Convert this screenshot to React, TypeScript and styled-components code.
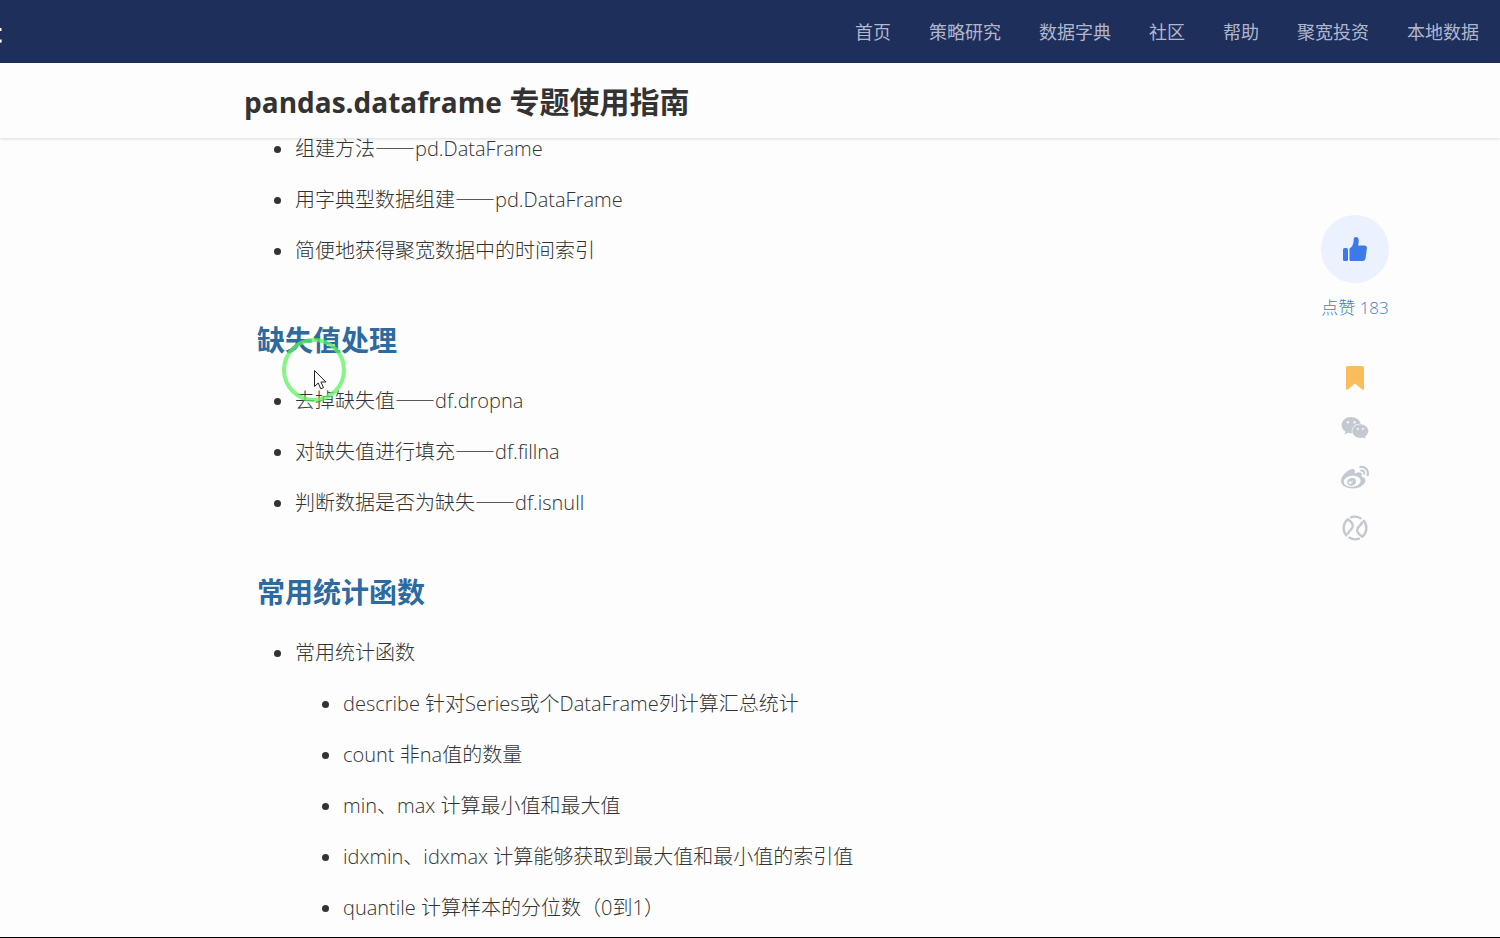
import React from "react";
import styled, { createGlobalStyle } from "styled-components";
import { FaWeixin, FaWeibo } from "react-icons/fa";

const cjk = '"Noto Sans CJK SC"';

const GlobalStyle = createGlobalStyle`
  * { box-sizing: border-box; }
  body {
    margin: 0;
    background: #fdfdfd;
    color: #333;
    font-family: "Open Sans", ${cjk}, sans-serif;
  }
`;

const Page = styled.div`
  display: flex;
  flex-direction: column;
  height: 100vh;
  overflow: hidden;
  border-bottom: 1px solid #000;
`;

const TopBar = styled.header`
  display: flex;
  flex: none;
  align-items: center;
  justify-content: space-between;
  height: 63px;
  padding-right: 21px;
  background: #1f2f5c;
`;

const Logo = styled.a`
  margin-left: -9px;
  padding-top: 2px;
  color: #fff;
  font-size: 26px;
  font-weight: 700;
  line-height: 32px;
  text-decoration: none;
`;

const Nav = styled.nav`
  display: flex;
  gap: 38px;
  padding-bottom: 2px;
`;

const NavLink = styled.a`
  color: #b0b7cc;
  font-family: ${cjk}, sans-serif;
  font-size: 18px;
  font-weight: 400;
  line-height: 28px;
  text-decoration: none;
`;

const TitleBar = styled.div`
  position: relative;
  z-index: 1;
  flex: none;
  padding: 19px 244px 16px;
  background: #fdfdfd;
  box-shadow: 0 1px 3px rgba(0, 0, 0, 0.14);
`;

const Title = styled.h1`
  margin: 0;
  color: #333;
  font-size: 30px;
  font-weight: 700;
  line-height: 40px;
`;

const Latin = styled.span`
  font-size: 28px;
  line-height: 1;
`;

const Body = styled.main`
  display: flex;
  flex: 1;
  align-items: flex-start;
  justify-content: space-between;
  min-height: 0;
  margin-top: -7px;
  padding: 0 111px 0 257px;
`;

const Heading = styled.h2`
  margin: 51px 0 23px;
  color: #2c6aa0;
  font-size: 28px;
  font-weight: 700;
  line-height: 40px;
`;

const List = styled.ul<{ $nested?: boolean }>`
  display: flex;
  flex-direction: column;
  gap: 15px;
  margin: ${(p) => (p.$nested ? "15px 0 0" : "0")};
  padding-left: ${(p) => (p.$nested ? "48px" : "38px")};
  list-style: none;
`;

const Item = styled.li`
  position: relative;
  font-size: 20px;
  font-weight: 300;
  line-height: 36px;

  &::before {
    position: absolute;
    top: 15px;
    left: -21px;
    width: 7px;
    height: 7px;
    border-radius: 50%;
    background: #333;
    content: "";
  }
`;

const Dash = styled.span`
  font-family: ${cjk}, sans-serif;
  line-height: 1;
`;

const Paren = styled.span`
  font-family: "Noto Sans CJK TC", sans-serif;
  line-height: 1;
`;

const Actions = styled.aside`
  display: flex;
  flex-direction: column;
  align-items: center;
  padding-top: 84px;
`;

const LikeButton = styled.button`
  display: flex;
  align-items: center;
  justify-content: center;
  width: 68px;
  height: 68px;
  padding: 0;
  border: 0;
  border-radius: 50%;
  background: #ebf1fe;
`;

const LikeCount = styled.span`
  margin: 11px 0 31px;
  color: #3f7fc4;
  font-size: 17px;
  font-weight: 300;
  line-height: 28px;
  white-space: nowrap;
`;

const IconButton = styled.button<{ $color?: string }>`
  display: flex;
  align-items: center;
  justify-content: center;
  width: 50px;
  height: 50px;
  padding: 0;
  border: 0;
  background: none;
  color: ${(p) => p.$color ?? "#c3c8d1"};
`;

const Pointer = styled.svg`
  position: absolute;
  top: 337px;
  left: 281px;
  z-index: 2;
  pointer-events: none;
`;

const navItems = ["首页", "策略研究", "数据字典", "社区", "帮助", "聚宽投资", "本地数据"];

const statistics: { id: string; text: React.ReactNode }[] = [
  { id: "describe", text: "describe 针对Series或个DataFrame列计算汇总统计" },
  { id: "count", text: "count 非na值的数量" },
  { id: "minmax", text: "min、max 计算最小值和最大值" },
  { id: "idx", text: "idxmin、idxmax 计算能够获取到最大值和最小值的索引值" },
  {
    id: "quantile",
    text: (
      <>
        quantile 计算样本的分位数<Paren lang="zh-TW">（</Paren>0到1<Paren lang="zh-TW">）</Paren>
      </>
    ),
  },
];

function Method({ name, call }: { name: string; call: string }) {
  return (
    <Item>
      {name}
      <Dash>——</Dash>
      {call}
    </Item>
  );
}

export default function App() {
  return (
    <>
      <GlobalStyle />
      <Page lang="zh-CN">
        <TopBar>
          <Logo href="#">t</Logo>
          <Nav>
            {navItems.map((item) => (
              <NavLink href="#" key={item}>{item}</NavLink>
            ))}
          </Nav>
        </TopBar>
        <TitleBar>
          <Title><Latin>pandas.dataframe</Latin> 专题使用指南</Title>
        </TitleBar>
        <Body>
          <article>
            <List>
              <Method name="组建方法" call="pd.DataFrame" />
              <Method name="用字典型数据组建" call="pd.DataFrame" />
              <Item>简便地获得聚宽数据中的时间索引</Item>
            </List>
            <Heading>缺失值处理</Heading>
            <List>
              <Method name="去掉缺失值" call="df.dropna" />
              <Method name="对缺失值进行填充" call="df.fillna" />
              <Method name="判断数据是否为缺失" call="df.isnull" />
            </List>
            <Heading>常用统计函数</Heading>
            <List>
              <Item>
                常用统计函数
                <List $nested>
                  {statistics.map(({ id, text }) => (
                    <Item key={id}>{text}</Item>
                  ))}
                </List>
              </Item>
            </List>
          </article>
          <Actions>
            <LikeButton aria-label="点赞">
              <svg width="24" height="26" viewBox="0 0 24 26" fill="#3b7ae8">
                <rect x="0" y="12" width="5" height="13" rx="1.5" />
                <path d="M6.500 12.500c2.500-1.500 4-4 4.200-8V3.500c0-3.200 5-3.400 5 .8 0 2.200-.2 3.600-.7 5.200h6.500c1.700 0 2.600 1.200 2.400 2.700l-1.300 9.800c-.3 2-1.200 3-3 3H8c-1 0-1.500-.6-1.500-1.500z" />
              </svg>
            </LikeButton>
            <LikeCount>点赞 183</LikeCount>
            <IconButton aria-label="收藏" $color="#fbbd5c">
              <svg width="18" height="24" viewBox="0 0 18 24" fill="currentColor">
                <path d="M2 0h14a2 2 0 0 1 2 2v20.500c0 1.200-1 1.600-1.900.9L9 17.500l-7.100 5.900c-.9.7-1.900.3-1.900-.9V2a2 2 0 0 1 2-2z" />
              </svg>
            </IconButton>
            <IconButton aria-label="微信"><FaWeixin size={28} /></IconButton>
            <IconButton aria-label="微博"><FaWeibo size={28} /></IconButton>
            <IconButton aria-label="朋友圈">
              <svg width="26" height="26" viewBox="0 0 26 26" fill="none" stroke="currentColor" strokeWidth="2.4" strokeLinecap="round">
                <path d="M4.200 20.200A11.400 11.400 0 0 1 5.700 4.300C9.500 6.800 11.600 9.500 10.600 12.200C9.800 14.600 7 15.800 6 18.500" />
                <path d="M21.800 5.800A11.400 11.400 0 0 1 20.300 21.700C16.500 19.200 14.400 16.500 15.400 13.800C16.200 11.400 19 10.200 20 7.500" />
                <path d="M9 2.300a11.400 11.400 0 0 1 9.500 1M17 23.700a11.400 11.400 0 0 1-9.500-1" />
              </svg>
            </IconButton>
          </Actions>
        </Body>
        <Pointer width="66" height="66" viewBox="0 0 66 66">
          <circle cx="33" cy="33" r="30" fill="none" stroke="#5cf25c" strokeOpacity="0.75" strokeWidth="4" />
          <path d="M33.500 33.500v16l3.700-3.500 2.600 5.800 2.700-1.200-2.600-5.600h5z" fill="#fff" stroke="#222" />
        </Pointer>
      </Page>
    </>
  );
}
